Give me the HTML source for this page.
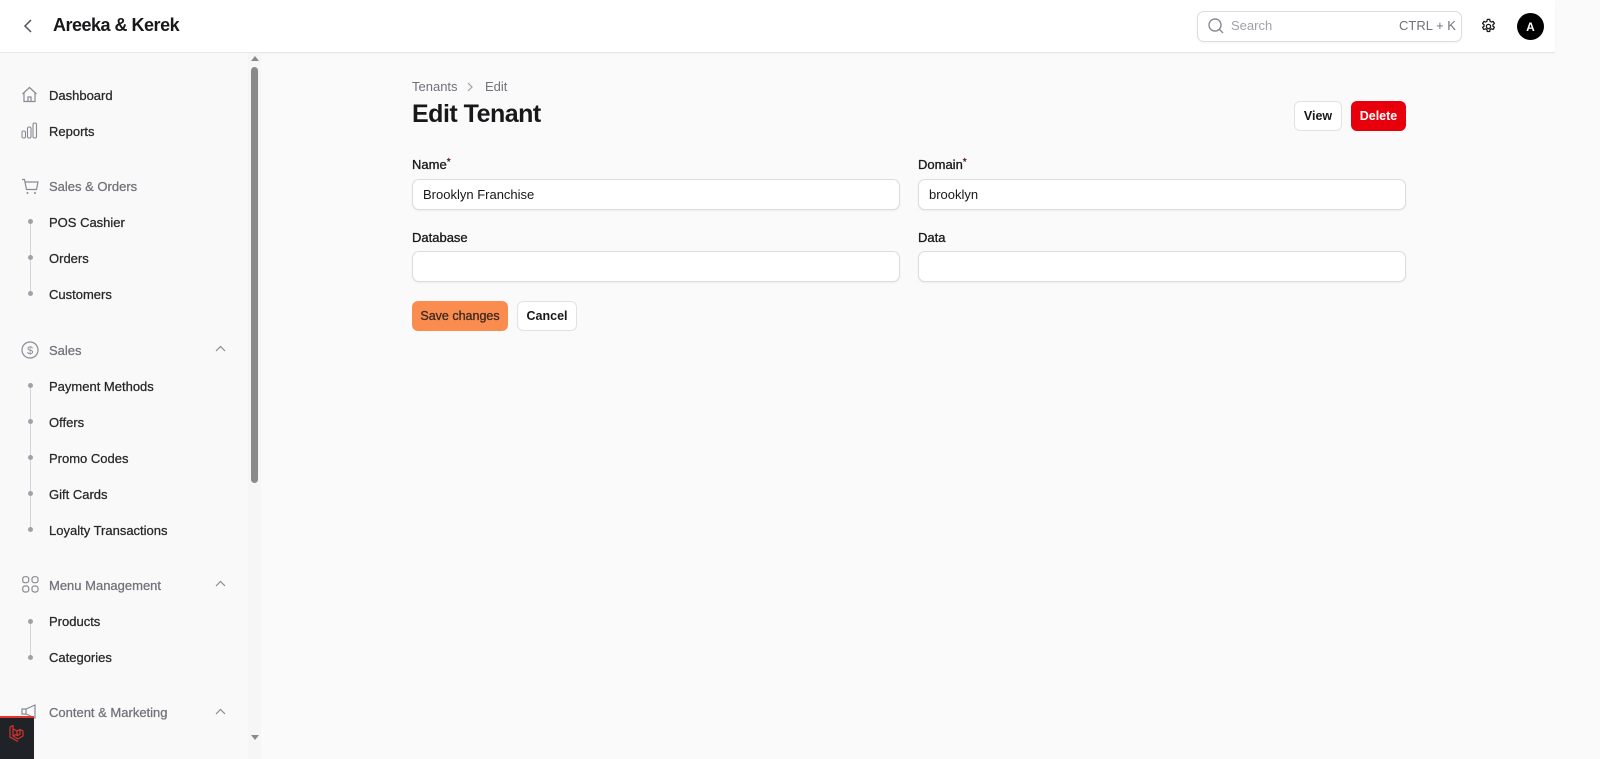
<!DOCTYPE html>
<html><head><meta charset="utf-8"><style>
*{box-sizing:border-box;margin:0;padding:0}
body{width:1600px;height:759px;overflow:hidden;background:#fafafa;font-family:"Liberation Sans",sans-serif;color:#18181b;position:relative}
.a{position:absolute}
.hdr{left:0;top:0;width:1555px;height:53px;background:#fff;border-bottom:1px solid #e8e8e8;box-shadow:0 1px 2px rgba(0,0,0,.04)}
.side{left:0;top:53px;width:261px;height:706px;background:#f9f9f9;border-right:1px solid #e6e6e6}
.nav{font-size:13px;color:#27272a;-webkit-text-stroke:.25px #27272a}
.grp{color:#71717a;-webkit-text-stroke:.25px #71717a}
.dot{width:5px;height:5px;border-radius:50%;background:#a1a1aa}
.lbl{font-size:13px;color:#18181b;-webkit-text-stroke:.3px #18181b}
.inp{height:31px;background:#fff;border:1px solid #dcdcdc;border-radius:7px;box-shadow:0 1px 2px rgba(0,0,0,.06);font-size:13px;padding:7px 10px;color:#18181b}
.btn{height:30px;border-radius:6px;font-size:12.5px;font-weight:bold;display:flex;align-items:center;justify-content:center}
.req{color:#dc2626;font-size:10px;vertical-align:top}
svg{display:block}
</style></head><body>
<div class="a hdr"></div>
<svg class="a" style="left:20px;top:17px" width="16" height="18" viewBox="0 0 16 18"><path d="M11 3 L5 9 L11 15" fill="none" stroke="#52525b" stroke-width="1.5"/></svg>
<div class="a" style="left:53px;top:15px;font-size:18px;font-weight:bold;letter-spacing:-.5px">Areeka &amp; Kerek</div>
<div class="a" style="left:1197px;top:11px;width:265px;height:31px;border:1px solid #ddd;border-radius:7px;background:#fff;box-shadow:0 1px 2px rgba(0,0,0,.05)"></div>
<svg class="a" style="left:1207px;top:17px" width="18" height="18" viewBox="0 0 18 18"><circle cx="8" cy="8" r="6" fill="none" stroke="#8a8a94" stroke-width="1.4"/><path d="M12.5 12.5 L16 16" stroke="#8a8a94" stroke-width="1.4"/></svg>
<div class="a" style="left:1231px;top:18px;font-size:13px;color:#a1a1aa">Search</div>
<div class="a" style="left:1399px;top:18px;font-size:13px;color:#71717a">CTRL + K</div>
<svg class="a" style="left:1480px;top:18px" width="17" height="17" viewBox="0 0 24 24"><path d="M10.3 2h3.4l.5 2.6 1.9 1.1 2.5-.9 1.7 2.9-2 1.7v2.2l2 1.7-1.7 2.9-2.5-.9-1.9 1.1-.5 2.6h-3.4l-.5-2.6-1.9-1.1-2.5.9-1.7-2.9 2-1.7v-2.2l-2-1.7 1.7-2.9 2.5.9 1.9-1.1z" fill="none" stroke="#18181b" stroke-width="1.8" stroke-linejoin="round"/><circle cx="12" cy="12" r="3" fill="none" stroke="#18181b" stroke-width="1.8"/></svg>
<div class="a" style="left:1517px;top:13px;width:27px;height:27px;border-radius:50%;background:#000;color:#fff;font-size:12px;font-weight:bold;display:flex;align-items:center;justify-content:center">A</div>

<div class="a side"></div>
<div class="a" style="left:248px;top:53px;width:13px;height:706px;background:#f6f6f6"></div>
<div class="a" style="left:251px;top:67px;width:7px;height:416px;background:#8a8a8a;border-radius:4px"></div>
<div class="a" style="left:251px;top:56px;width:0;height:0;border-left:4px solid transparent;border-right:4px solid transparent;border-bottom:5px solid #8a8a8a"></div>
<div class="a" style="left:251px;top:735px;width:0;height:0;border-left:4px solid transparent;border-right:4px solid transparent;border-top:5px solid #8a8a8a"></div>

<svg class="a" style="left:21px;top:86px" width="17" height="17" viewBox="0 0 17 17"><path d="M1.5 8 L8.5 1.5 L15.5 8 M3 6.5 V15.5 H14 V6.5 M7 15.5 V11 H10 V15.5" fill="none" stroke="#8a8a94" stroke-width="1.2"/></svg>
<div class="a nav" style="left:49px;top:88px">Dashboard</div>
<svg class="a" style="left:21px;top:122px" width="17" height="17" viewBox="0 0 17 17"><rect x="1" y="9" width="3.5" height="7" rx="1.5" fill="none" stroke="#8a8a94" stroke-width="1.1"/><rect x="6.5" y="5" width="3.5" height="11" rx="1.5" fill="none" stroke="#8a8a94" stroke-width="1.1"/><rect x="12" y="1" width="3.5" height="15" rx="1.5" fill="none" stroke="#8a8a94" stroke-width="1.1"/></svg>
<div class="a nav" style="left:49px;top:124px">Reports</div>

<svg class="a" style="left:21px;top:178px" width="18" height="17" viewBox="0 0 18 17"><path d="M1 1.5 H3.5 L5.5 11.5 H15.5 L17 4 H4" fill="none" stroke="#8a8a94" stroke-width="1.2"/><circle cx="6.5" cy="15" r="1" fill="#8a8a94"/><circle cx="14" cy="15" r="1" fill="#8a8a94"/></svg>
<div class="a nav grp" style="left:49px;top:179px">Sales &amp; Orders</div>
<div class="a" style="left:30px;top:222px;width:1px;height:72px;background:#d4d4d8"></div>
<div class="a dot" style="left:28px;top:219px"></div><div class="a nav" style="left:49px;top:215px">POS Cashier</div>
<div class="a dot" style="left:28px;top:255px"></div><div class="a nav" style="left:49px;top:251px">Orders</div>
<div class="a dot" style="left:28px;top:291px"></div><div class="a nav" style="left:49px;top:287px">Customers</div>

<svg class="a" style="left:21px;top:341px" width="18" height="18" viewBox="0 0 18 18"><circle cx="9" cy="9" r="8" fill="none" stroke="#8a8a94" stroke-width="1.2"/><text x="9" y="13" font-size="11" text-anchor="middle" fill="#8a8a94" font-family="Liberation Sans">$</text></svg>
<div class="a nav grp" style="left:49px;top:343px">Sales</div>
<svg class="a" style="left:215px;top:345px" width="11" height="7" viewBox="0 0 11 7"><path d="M1 6 L5.5 1.5 L10 6" fill="none" stroke="#8a8a94" stroke-width="1.2"/></svg>
<div class="a" style="left:30px;top:386px;width:1px;height:144px;background:#d4d4d8"></div>
<div class="a dot" style="left:28px;top:383px"></div><div class="a nav" style="left:49px;top:379px">Payment Methods</div>
<div class="a dot" style="left:28px;top:419px"></div><div class="a nav" style="left:49px;top:415px">Offers</div>
<div class="a dot" style="left:28px;top:455px"></div><div class="a nav" style="left:49px;top:451px">Promo Codes</div>
<div class="a dot" style="left:28px;top:491px"></div><div class="a nav" style="left:49px;top:487px">Gift Cards</div>
<div class="a dot" style="left:28px;top:527px"></div><div class="a nav" style="left:49px;top:523px">Loyalty Transactions</div>

<svg class="a" style="left:22px;top:576px" width="17" height="17" viewBox="0 0 17 17"><rect x=".7" y=".7" width="6" height="6" rx="2.2" fill="none" stroke="#8a8a94" stroke-width="1.2"/><rect x="10" y=".7" width="6" height="6" rx="2.2" fill="none" stroke="#8a8a94" stroke-width="1.2"/><rect x=".7" y="10" width="6" height="6" rx="2.2" fill="none" stroke="#8a8a94" stroke-width="1.2"/><rect x="10" y="10" width="6" height="6" rx="2.2" fill="none" stroke="#8a8a94" stroke-width="1.2"/></svg>
<div class="a nav grp" style="left:49px;top:578px">Menu Management</div>
<svg class="a" style="left:215px;top:580px" width="11" height="7" viewBox="0 0 11 7"><path d="M1 6 L5.5 1.5 L10 6" fill="none" stroke="#8a8a94" stroke-width="1.2"/></svg>
<div class="a" style="left:30px;top:622px;width:1px;height:36px;background:#d4d4d8"></div>
<div class="a dot" style="left:28px;top:619px"></div><div class="a nav" style="left:49px;top:614px">Products</div>
<div class="a dot" style="left:28px;top:655px"></div><div class="a nav" style="left:49px;top:650px">Categories</div>

<svg class="a" style="left:21px;top:704px" width="18" height="16" viewBox="0 0 18 16"><path d="M1 5 H5 L14 1 V14 L5 10 H1 Z M5 5 V10" fill="none" stroke="#8a8a94" stroke-width="1.2"/></svg>
<div class="a nav grp" style="left:49px;top:705px">Content &amp; Marketing</div>
<svg class="a" style="left:215px;top:708px" width="11" height="7" viewBox="0 0 11 7"><path d="M1 6 L5.5 1.5 L10 6" fill="none" stroke="#8a8a94" stroke-width="1.2"/></svg>
<div class="a" style="left:0;top:716px;width:34px;height:43px;background:#1f2328;border-top:2px solid #e3342f"></div>
<svg class="a" style="left:8px;top:724px" width="18" height="18" viewBox="0 0 18 18"><path d="M2 3 L5 1.5 L5 12 L10 15 L15 12 L15 7 L12 5.5 L9 7 L9 12 M5 5 L9 7 M12 5.5 L12 10 L9 12 M5 12 L9 10" fill="none" stroke="#e3342f" stroke-width="1.1"/><path d="M2 3 V13 L10 17.5" fill="none" stroke="#e3342f" stroke-width="1.1"/></svg>

<div class="a" style="left:412px;top:79px;font-size:13px;color:#71717a">Tenants</div>
<svg class="a" style="left:466px;top:82px" width="8" height="10" viewBox="0 0 8 10"><path d="M2 1 L6 5 L2 9" fill="none" stroke="#a1a1aa" stroke-width="1.2"/></svg>
<div class="a" style="left:485px;top:79px;font-size:13px;color:#71717a">Edit</div>
<div class="a" style="left:412px;top:100px;font-size:25px;font-weight:bold;letter-spacing:-.5px">Edit Tenant</div>
<div class="a btn" style="left:1294px;top:101px;width:48px;background:#fff;border:1px solid #e2e2e2">View</div>
<div class="a btn" style="left:1351px;top:101px;width:55px;background:#e7000b;color:#fff">Delete</div>

<div class="a lbl" style="left:412px;top:157px">Name<span class="req">*</span></div>
<div class="a inp" style="left:412px;top:179px;width:488px">Brooklyn Franchise</div>
<div class="a lbl" style="left:918px;top:157px">Domain<span class="req">*</span></div>
<div class="a inp" style="left:918px;top:179px;width:488px">brooklyn</div>
<div class="a lbl" style="left:412px;top:230px">Database</div>
<div class="a inp" style="left:412px;top:251px;width:488px"></div>
<div class="a lbl" style="left:918px;top:230px">Data</div>
<div class="a inp" style="left:918px;top:251px;width:488px"></div>
<div class="a btn" style="left:412px;top:301px;width:96px;background:#fb8c50;color:#3a2a20;font-weight:normal;-webkit-text-stroke:.3px #3a2a20">Save changes</div>
<div class="a btn" style="left:517px;top:301px;width:60px;background:#fff;border:1px solid #e2e2e2">Cancel</div>
</body></html>
